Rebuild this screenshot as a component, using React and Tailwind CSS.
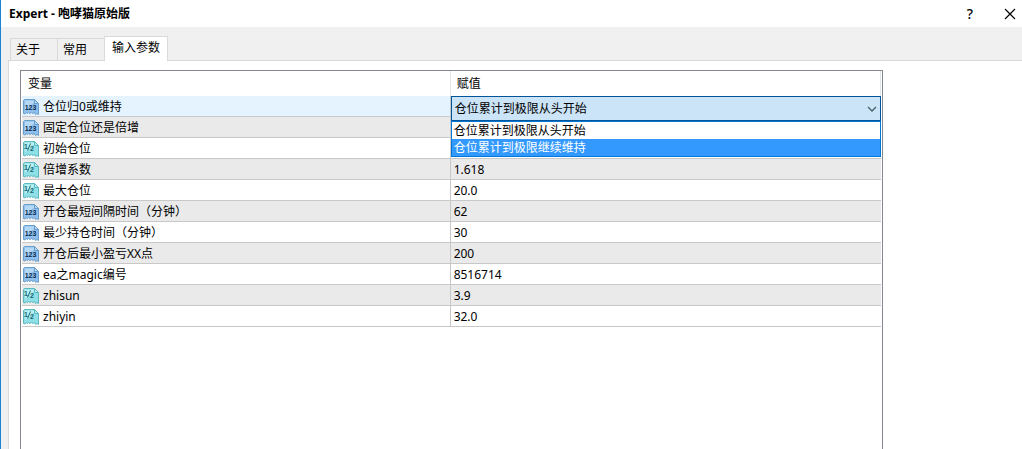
import { useState } from "react";

const OPTIONS = ["仓位累计到极限从头开始", "仓位累计到极限继续维持"];

const TABS = ["关于", "常用", "输入参数"];

const PARAMS = [
  { type: "int", name: "仓位归0或维持", value: "" },
  { type: "int", name: "固定仓位还是倍增", value: "" },
  { type: "double", name: "初始仓位", value: "" },
  { type: "double", name: "倍增系数", value: "1.618" },
  { type: "double", name: "最大仓位", value: "20.0" },
  { type: "int", name: "开仓最短间隔时间（分钟）", value: "62" },
  { type: "int", name: "最少持仓时间（分钟）", value: "30" },
  { type: "int", name: "开仓后最小盈亏XX点", value: "200" },
  { type: "int", name: "ea之magic编号", value: "8516714" },
  { type: "double", name: "zhisun", value: "3.9" },
  { type: "double", name: "zhiyin", value: "32.0" },
];

// 参数类型图标
function TypeIcon({ type }) {
  const isInt = type === "int";
  const edge = isInt ? "#6a9fcb" : "#5bb8c0";
  const fill = isInt ? "#8fbfee" : "#8fe0e6";
  const light = isInt ? "#b5d8f5" : "#b9f0f2";
  const ink = isInt ? "#0c2c4a" : "#176573";
  return (
    <svg width="16" height="16" viewBox="0 0 16 16" aria-hidden="true" className="shrink-0">
      <path
        d="M1.5 .5H11.5L15.5 4.5V15.5L14 14.5L12.5 15.5L11.5 13.5L10 14.5L8.5 13.5L7 14.5L5.5 13.5L4 14.5L3 13.5L2 15L.5 14.5V1.5Z"
        fill={fill}
        stroke={edge}
      />
      <path d="M2 1.5H11V3.500L2 11Z" fill={light} />
      <path d="M11.5 .5V4.5H15.5Z" fill={light} stroke={edge} />
      {isInt ? (
        <text
          x="7.500"
          y="11"
          textAnchor="middle"
          fontFamily="Liberation Sans, sans-serif"
          fontSize="7"
          fontWeight="700"
          fill={ink}
        >
          123
        </text>
      ) : (
        <>
          <text
            x="1"
            y="8"
            fontFamily="Liberation Sans, sans-serif"
            fontSize="7"
            fontWeight="700"
            fill={ink}
          >
            1
          </text>
          <path d="M7.500 2.500L4.500 9.500" stroke={ink} />
          <text
            x="7"
            y="10"
            fontFamily="Liberation Sans, sans-serif"
            fontSize="7"
            fontWeight="700"
            fill={ink}
          >
            2
          </text>
        </>
      )}
    </svg>
  );
}

function EnumSelect({ label }) {
  const [open, setOpen] = useState(true);
  const [value, setValue] = useState(OPTIONS[0]);
  const [active, setActive] = useState(1);

  // 用自定义列表代替浏览器原生下拉
  const toggle = (e) => {
    e.preventDefault();
    setOpen(!open);
  };

  return (
    <div className="absolute inset-x-0 top-0 z-10">
      <select
        aria-label={label}
        value={value}
        onChange={(e) => setValue(e.target.value)}
        onMouseDown={toggle}
        className="block h-[25px] w-full appearance-none border border-[#005499] bg-[#cce4f7] px-[3px] text-xs text-black outline-none"
      >
        {OPTIONS.map((item) => (
          <option key={item}>{item}</option>
        ))}
      </select>
      <svg
        width="10"
        height="6"
        viewBox="0 0 10 6"
        aria-hidden="true"
        className="pointer-events-none absolute top-[10px] right-1"
      >
        <path d="M1 1L5 5L9 1" fill="none" stroke="#3f6068" strokeWidth="1.300" />
      </svg>
      {open && (
        <ul role="listbox" aria-label={label} className="border border-[#0078d7] bg-white">
          {OPTIONS.map((item, idx) => (
            <li
              key={item}
              role="option"
              aria-selected={idx === active}
              onMouseEnter={() => setActive(idx)}
              onClick={() => {
                setValue(item);
                setOpen(false);
              }}
              className={
                idx === active
                  ? "bg-[#3399ff] px-[2px] leading-[17px] text-white"
                  : "px-[2px] leading-[17px]"
              }
            >
              {item}
            </li>
          ))}
        </ul>
      )}
    </div>
  );
}

export default function App() {
  const [tab, setTab] = useState(2);

  return (
    <div className="flex h-screen flex-col overflow-hidden border-l border-[#1883d7] bg-[#f0f0f0] font-['Noto_Sans','Noto_Sans_CJK_SC',sans-serif] text-xs text-black">
      {/* 标题栏 */}
      <header className="flex h-[27px] shrink-0 items-center bg-white pr-1 pl-2">
        <h1 className="flex-1 font-bold">Expert - 咆哮猫原始版</h1>
        <button type="button" aria-label="帮助" className="w-4 text-center text-sm font-medium">
          ?
        </button>
        <button type="button" aria-label="关闭" className="ml-6 flex w-4 justify-center">
          <svg width="12" height="12" viewBox="0 0 12 12" aria-hidden="true">
            <path d="M1 1L11 11M11 1L1 11" stroke="#000" strokeWidth="1.200" />
          </svg>
        </button>
      </header>

      {/* 选项卡 */}
      <div role="tablist" className="z-10 -mb-px flex shrink-0 items-end pt-[9px] pl-[9px]">
        {TABS.map((item, idx) => (
          <button
            key={item}
            type="button"
            role="tab"
            aria-selected={idx === tab}
            onClick={() => setTab(idx)}
            className={
              idx === tab
                ? "h-[25px] border border-b-0 border-[#d9d9d9] bg-white px-[7px] pb-[2px]"
                : "h-[23px] w-[47px] border border-r-0 border-[#d9d9d9] pr-4 pl-[5px] text-left whitespace-nowrap"
            }
          >
            {item}
          </button>
        ))}
      </div>

      <main className="ml-[7px] flex min-h-0 flex-1 flex-col border-t border-l border-[#d9d9d9] bg-white pt-[9px] pr-4 pl-[11px]">
        <div className="w-full max-w-[863px] flex-1 border border-b-0 border-[#828790] px-px">
          <table className="w-full table-fixed border-separate border-spacing-0">
            <colgroup>
              <col className="w-[49.9%]" />
              <col />
            </colgroup>
            <thead>
              <tr className="h-[25px] text-left">
                <th className="border-r border-[#e0e6ea] p-0 pl-[6px] font-normal">变量</th>
                <th className="border-r border-[#e0e6ea] p-0 pl-[6px] font-normal">赋值</th>
              </tr>
            </thead>
            <tbody>
              {PARAMS.map((item, idx) => (
                <tr
                  key={item.name}
                  className={
                    idx === 0 ? "h-[21px] bg-[#e5f3ff]" : "h-[21px] even:bg-[#eaeaea]"
                  }
                >
                  <td className="border-r border-b border-[#c8c8c8] p-0">
                    <div className="flex h-5 items-center gap-1 pt-[2px] pl-px">
                      <TypeIcon type={item.type} />
                      {item.name}
                    </div>
                  </td>
                  <td className="relative border-b border-[#c8c8c8] p-0 pt-[2px] pl-[3px]">
                    {idx === 0 ? <EnumSelect label={item.name} /> : item.value}
                  </td>
                </tr>
              ))}
            </tbody>
          </table>
        </div>
      </main>
    </div>
  );
}
